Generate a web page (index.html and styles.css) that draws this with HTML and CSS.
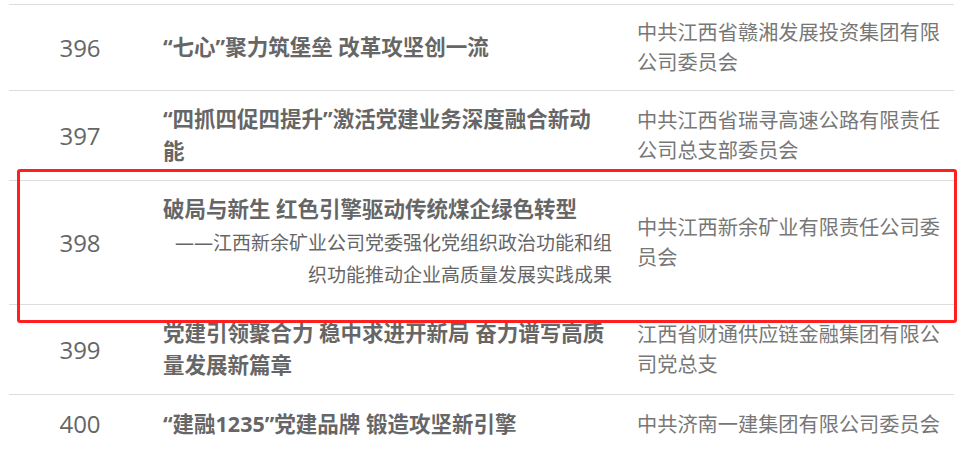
FILE: index.html
```html
<!DOCTYPE html>
<html>
<head>
<meta charset="utf-8">
<meta name="viewport" content="width=device-width, initial-scale=1">
<link rel="stylesheet" href="styles.css">
</head>
<body>

<div class="list">
  <div class="row">
    <div class="num">396</div>
    <div class="title">“七心”聚力筑堡垒 改革攻坚创一流</div>
    <div class="org">中共江西省赣湘发展投资集团有限公司委员会</div>
  </div>
  <div class="row">
    <div class="num">397</div>
    <div class="title">“四抓四促四提升”激活党建业务深度融合新动能</div>
    <div class="org">中共江西省瑞寻高速公路有限责任公司总支部委员会</div>
  </div>
  <div class="row">
    <div class="num">398</div>
    <div class="title">
      破局与新生 红色引擎驱动传统煤企绿色转型
      <div class="sub">——江西新余矿业公司党委强化党组织政治功能和组织功能推动企业高质量发展实践成果</div>
    </div>
    <div class="org">中共江西新余矿业有限责任公司委员会</div>
  </div>
  <div class="row">
    <div class="num">399</div>
    <div class="title">党建引领聚合力 稳中求进开新局 奋力谱写高质量发展新篇章</div>
    <div class="org">江西省财通供应链金融集团有限公司党总支</div>
  </div>
  <div class="row">
    <div class="num">400</div>
    <div class="title">“建融1235”党建品牌 锻造攻坚新引擎</div>
    <div class="org">中共济南一建集团有限公司委员会</div>
  </div>

  <!-- highlight box drawn over row 398 -->
  <div class="mark"></div>
</div>

</body>
</html>
```

FILE: styles.css
```css
body {
  margin: 0;
  background: #fff;
}

* {
  box-sizing: border-box;
  font-family: "Noto Sans", "Noto Sans CJK SC", sans-serif;
}

/* The table-like list */
.list {
  position: relative;
  width: 945px;
  margin: 4px 0 0 9px;
}

.row {
  display: grid;
  grid-template-columns: 142px 486px 317px;
  align-items: center;
  padding: 12px 0 13px 0;
  border-top: 1px solid #dddddd;
}

.row:last-of-type {
  border-bottom: 1px solid #dddddd;
}

/* Number column */
.num {
  text-align: center;
  font-family: "Open Sans", sans-serif;
  font-size: 24px;
  color: #666;
}

/* Title column */
.title {
  padding: 0 31px 0 12px;
  font-size: 21.5px;
  line-height: 32px;
  font-weight: bold;
  color: #666;
}

.sub {
  margin: 2px -6px 0 0;
  text-align: right;
  font-size: 19px;
  line-height: 32px;
  font-weight: normal;
}

/* Organisation column */
.org {
  padding: 0 12px 0 0;
  font-size: 20.2px;
  line-height: 30px;
  color: #777;
}

/* Red annotation box */
.mark {
  position: absolute;
  left: 8px;
  top: 165px;
  width: 940px;
  height: 154px;
  border: 3px solid #ff1f1f;
  border-radius: 3px;
}
```
